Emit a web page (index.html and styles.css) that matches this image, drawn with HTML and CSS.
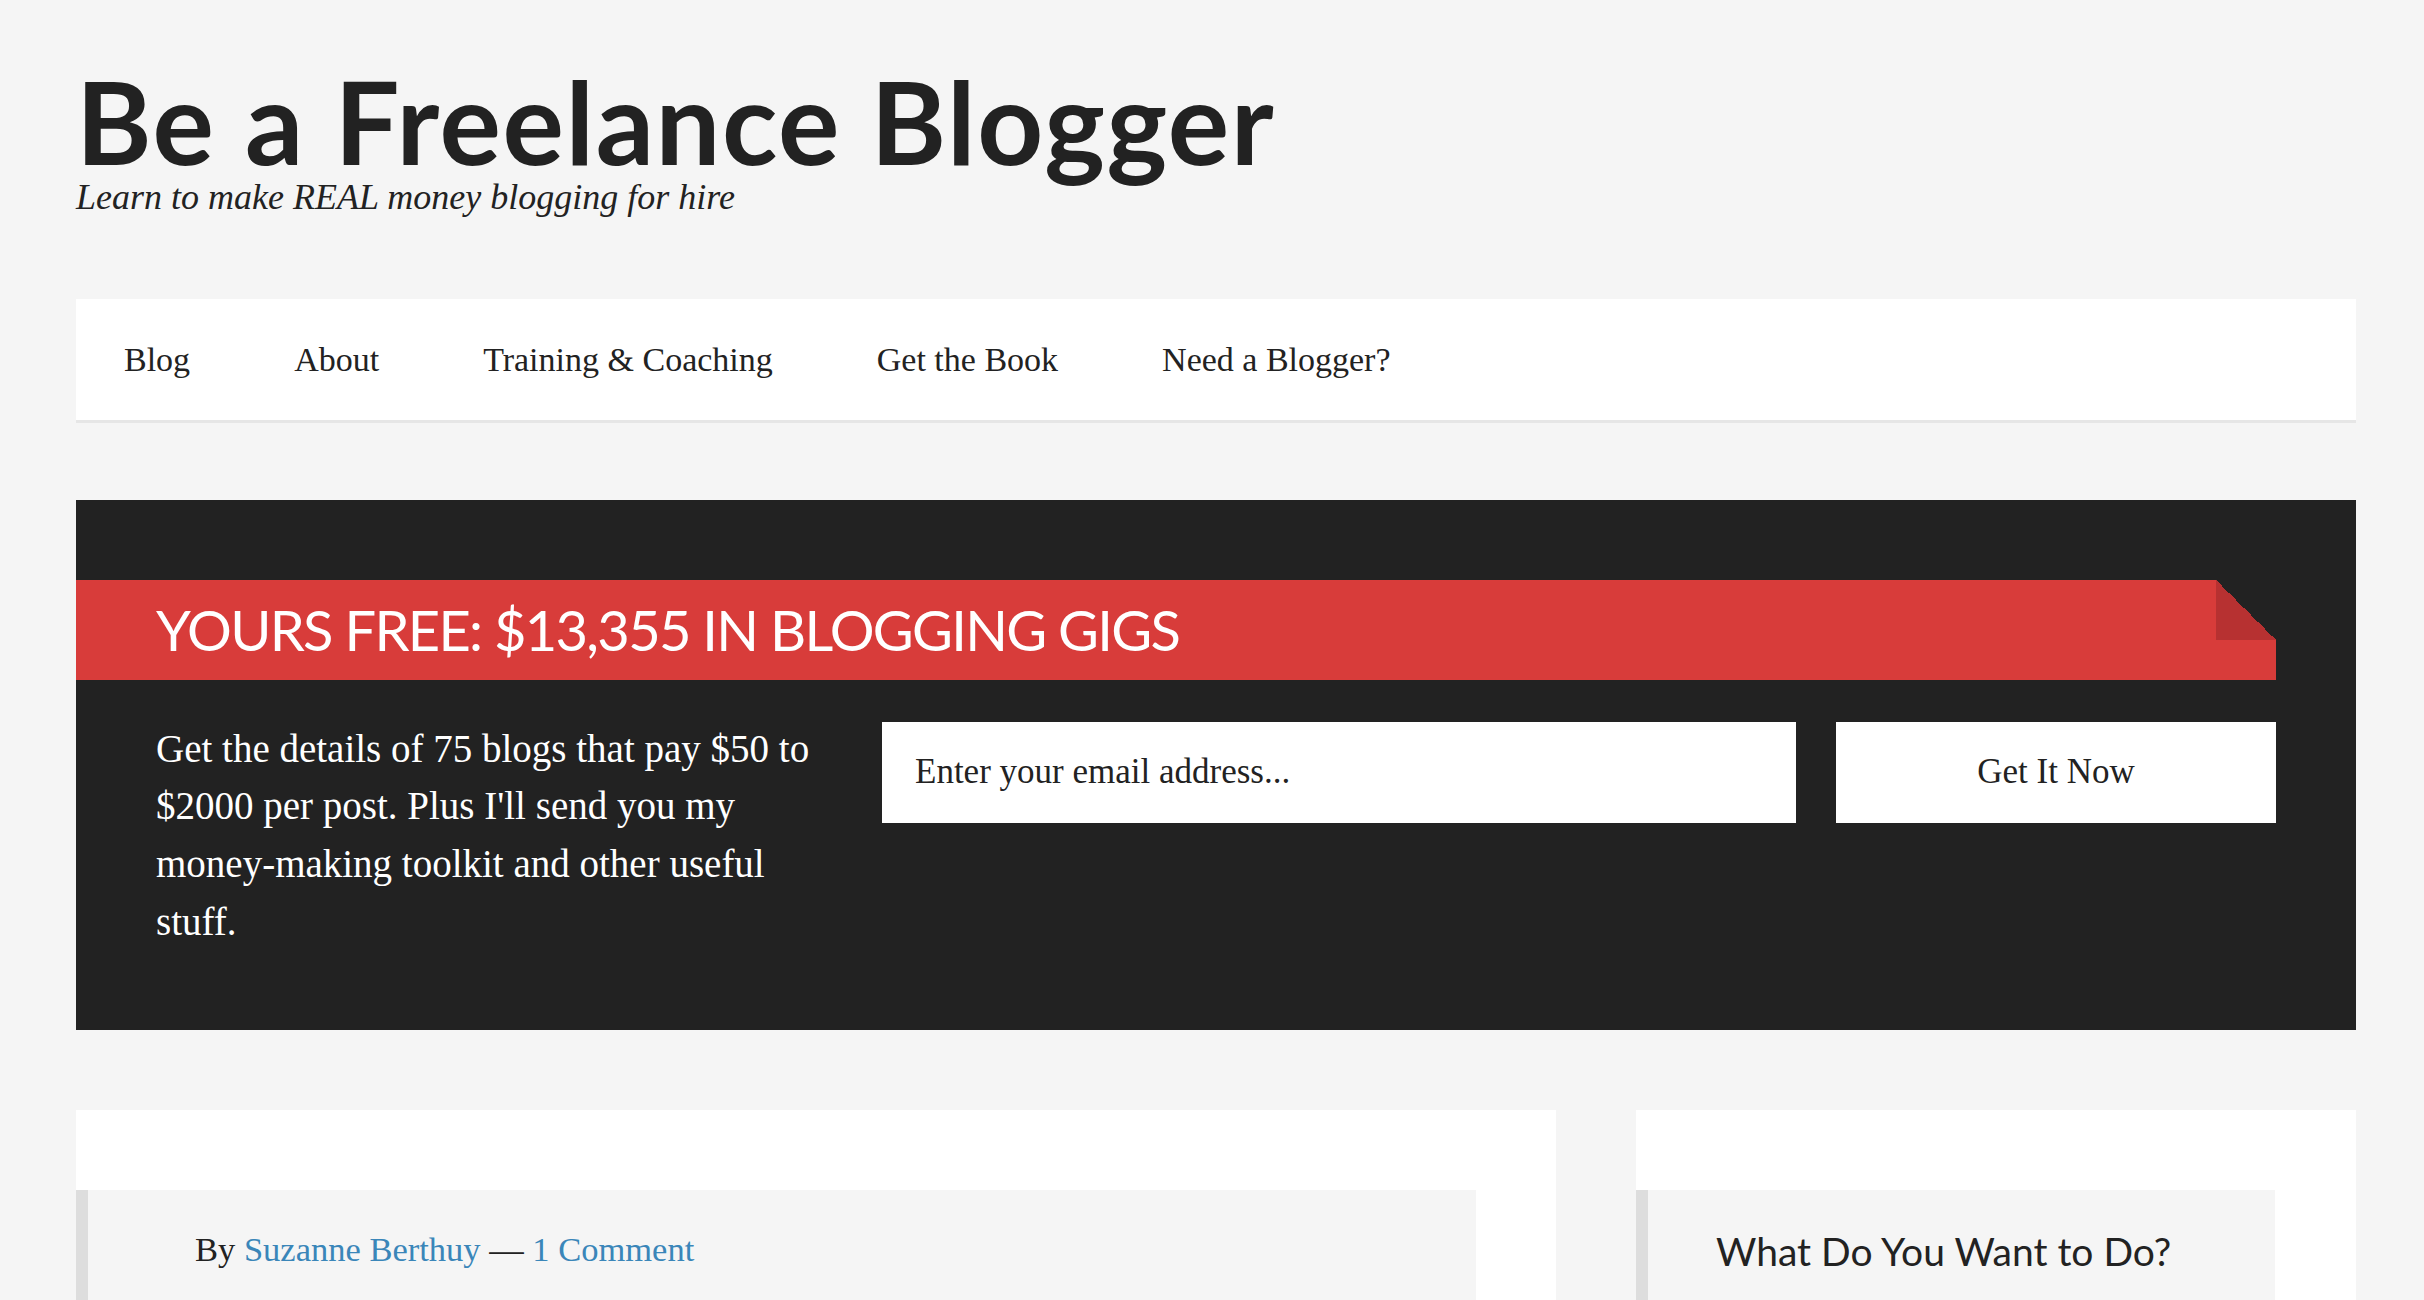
FILE: index.html
```html
<!DOCTYPE html>
<html lang="en">
<head>
  <meta charset="UTF-8">
  <title>Be a Freelance Blogger</title>
  <link rel="stylesheet" href="styles.css">
</head>
<body>
  <div class="site-container">
    <header class="site-header">
      <h1 class="site-title">Be a Freelance Blogger</h1>
      <p class="site-description">Learn to make REAL money blogging for hire</p>
    </header>

    <nav class="nav-primary">
      <ul class="menu">
        <li><a href="#">Blog</a></li>
        <li><a href="#">About</a></li>
        <li><a href="#">Training &amp; Coaching</a></li>
        <li><a href="#">Get the Book</a></li>
        <li><a href="#">Need a Blogger?</a></li>
      </ul>
    </nav>

    <!-- optin box -->
    <section class="optin">
      <h3 class="optin-title">YOURS FREE: $13,355 IN BLOGGING GIGS</h3>
      <div class="optin-body">
        <p>Get the details of 75 blogs that pay $50 to $2000 per post. Plus I'll send you my money-making toolkit and other useful stuff.</p>
        <input class="optin-email" type="email" placeholder="Enter your email address...">
        <button class="optin-button" type="button">Get It Now</button>
      </div>
    </section>

    <div class="content-sidebar-wrap">
      <main class="content">
        <article class="entry">
          <p class="entry-meta">By <a href="#">Suzanne Berthuy</a> — <a href="#">1 Comment</a></p>
        </article>
      </main>
      <aside class="sidebar">
        <section class="widget">
          <h4 class="widget-title">What Do You Want to Do?</h4>
        </section>
      </aside>
    </div>
  </div>
</body>
</html>
```

FILE: styles.css
```css
body {
  margin: 0;
  background-color: #f5f5f5;
  color: #222;
  font-family: "Liberation Serif", serif;
}

.site-container {
  width: 2280px;
  margin-left: 76px;
}

/* header */
.site-header {
  padding-top: 63px;
}

.site-title {
  margin: 0;
  font-family: Lato, sans-serif;
  font-size: 115px;
  font-weight: 700;
  line-height: 1;
  letter-spacing: 1.6px;
}

.site-description {
  margin: 0;
  font-size: 36px;
  font-style: italic;
  line-height: 1.1;
}

/* nav */
.nav-primary {
  margin-top: 81px;
  background-color: #fff;
  box-shadow: 0 3px 0 #e6e6e6;
}

.menu {
  display: flex;
  margin: 0 0 0 -4px;
  padding: 0;
  list-style: none;
}

.menu a {
  display: block;
  padding: 0 52px;
  font-size: 34px;
  line-height: 121px;
  color: #222;
  text-decoration: none;
}

/* optin */
.optin {
  margin-top: 80px;
  padding: 80px 80px 80px 0;
  background-color: #222;
}

.optin-title {
  position: relative;
  margin: 0;
  padding: 0 80px;
  height: 100px;
  background-color: #d83c3a;
  color: #fff;
  font-family: Lato, sans-serif;
  font-size: 56px;
  font-weight: 400;
  line-height: 100px;
  letter-spacing: -1.7px;
}

/* folded corner */
.optin-title::after {
  content: "";
  position: absolute;
  top: 0;
  right: 0;
  width: 60px;
  height: 60px;
  background: linear-gradient(45deg, #b73131 50%, #222 50%);
}

.optin-body {
  display: grid;
  grid-template-columns: 686px 914px 1fr;
  column-gap: 40px;
  align-items: start;
  margin-top: 42px;
  padding-left: 80px;
}

.optin-body p {
  margin: -2px 0 0;
  color: #fff;
  font-size: 39px;
  line-height: 57.7px;
}

.optin-email,
.optin-button {
  box-sizing: border-box;
  height: 101px;
  border: 0;
  background-color: #fff;
  color: #222;
  font-family: "Liberation Serif", serif;
  font-size: 35px;
}

.optin-email {
  padding: 0 33px;
}

.optin-email::placeholder {
  color: #222;
}

/* content + sidebar */
.content-sidebar-wrap {
  display: flex;
  gap: 80px;
  margin-top: 80px;
}

.content {
  width: 1480px;
  padding: 80px 80px 0 0;
  box-sizing: border-box;
  background-color: #fff;
}

.sidebar {
  width: 720px;
  padding: 80px 81px 0 0;
  box-sizing: border-box;
  background-color: #fff;
}

.entry,
.widget {
  min-height: 240px;
  border-left: 12px solid #ddd;
  background-color: #f5f5f5;
}

.entry {
  padding: 32px 0 0 107px;
}

.entry-meta {
  margin: 0;
  font-size: 34.5px;
  line-height: 1.6;
}

.entry-meta a {
  color: #3a86b9;
  text-decoration: none;
}

.widget {
  padding: 38px 0 0 68px;
}

.widget-title {
  margin: 0;
  font-family: Lato, sans-serif;
  font-size: 39px;
  font-weight: 400;
  line-height: 1.2;
}
```
